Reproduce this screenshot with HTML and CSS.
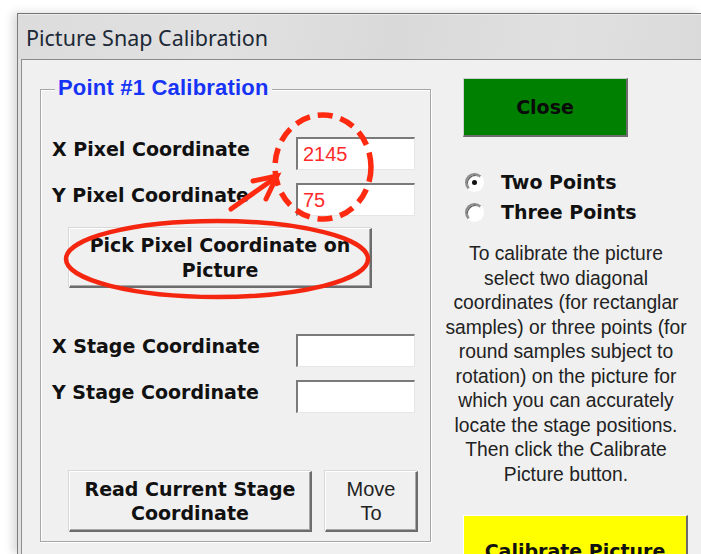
FILE: index.html
```html
<!DOCTYPE html>
<html lang="en">
<head>
<meta charset="utf-8">
<title>Picture Snap Calibration</title>
<link rel="stylesheet" href="styles.css">
</head>
<body>
<div class="window">
  <div class="titlebar">Picture Snap Calibration</div>
  <div class="frame">
    <div class="client">
      <section class="group">
        <h2 class="legend">Point #1 Calibration</h2>
        <div class="field">
          <label class="label" for="px">X Pixel Coordinate</label>
          <input class="box value" id="px" type="text" value="2145">
        </div>
        <div class="field next">
          <label class="label" for="py">Y Pixel Coordinate</label>
          <input class="box value" id="py" type="text" value="75">
        </div>
        <button class="btn pick" type="button">Pick Pixel Coordinate on<br>Picture</button>
        <div class="field stage">
          <label class="label" for="sx">X Stage Coordinate</label>
          <input class="box" id="sx" type="text" value="">
        </div>
        <div class="field next">
          <label class="label" for="sy">Y Stage Coordinate</label>
          <input class="box" id="sy" type="text" value="">
        </div>
        <div class="actions">
          <button class="btn read" type="button">Read Current Stage<br>Coordinate</button>
          <button class="btn move" type="button">Move<br>To</button>
        </div>
      </section>

      <aside class="side">
        <button class="btn close" type="button">Close</button>
        <div class="choices">
          <div class="choice"><span class="radio on"></span><span>Two Points</span></div>
          <div class="choice"><span class="radio"></span><span>Three Points</span></div>
        </div>
        <p class="note">To calibrate the picture<br>select two diagonal<br>coordinates (for rectanglar<br>samples) or three points (for<br>round samples subject to<br>rotation) on the picture for<br>which you can accurately<br>locate the stage positions.<br>Then click the Calibrate<br>Picture button.</p>
        <button class="btn calibrate" type="button">Calibrate Picture</button>
      </aside>
    </div>
  </div>
</div>

<svg class="marks" width="701" height="554" viewBox="0 0 701 554" aria-hidden="true">
  <ellipse cx="217" cy="259" rx="151" ry="38" fill="none" stroke="#f5260f" stroke-width="4.5"/>
  <ellipse cx="323" cy="167" rx="48" ry="52" fill="none" stroke="#ff2a10" stroke-width="5.5" stroke-dasharray="15 8"/>
  <path d="M231 209 L275 178" fill="none" stroke="#ff2a10" stroke-width="5" stroke-linecap="round"/>
  <path d="M253 181 L277 176 L266 199" fill="none" stroke="#ff2a10" stroke-width="5" stroke-linecap="round" stroke-linejoin="miter"/>
</svg>
</body>
</html>
```

FILE: styles.css
```css
html, body {
  margin: 0;
  padding: 0;
  background: #ffffff;
  overflow: hidden;
}

body {
  width: 701px;
  height: 554px;
  position: relative;
}

/* window chrome */
.window {
  margin: 13px 0 0 17px;
  width: 684px;
  height: 541px;
  border-top: 1px solid #747474;
  border-left: 1px solid #7c7c7c;
  background: #e2e2e2;
  box-shadow: -4px 0 9px rgba(0, 0, 0, 0.16);
  overflow: hidden;
  box-sizing: border-box;
}

.titlebar {
  height: 45px;
  line-height: 45px;
  padding-left: 8px;
  font-family: "Noto Sans", "Open Sans", sans-serif;
  font-size: 21.5px;
  color: #1c2836;
  background: linear-gradient(100deg, #dcdcdc 0%, #e1e1e1 30%, #d9d9d9 55%, #e0e0e0 80%, #dadada 100%);
  border-top: 1px solid #ececec;
  box-sizing: border-box;
}

.frame {
  padding-left: 3px;
  height: 100%;
}

.client {
  display: flex;
  align-items: flex-start;
  height: 100%;
  background: #f0f0f0;
  border-top: 1px solid #8a8a8a;
  border-left: 1px solid #8e8e8e;
  font-family: "DejaVu Sans", sans-serif;
  color: #111;
}

/* group box */
.group {
  position: relative;
  flex: none;
  box-sizing: border-box;
  width: 391px;
  height: 453px;
  margin: 29px 0 0 18px;
  padding: 47px 15px 0 11px;
  border: 1px solid #a6a6a6;
  box-shadow: inset 1px 1px 0 #ffffff, 1px 1px 0 #ffffff;
}

.legend {
  position: absolute;
  top: -13px;
  left: 14px;
  margin: 0;
  padding: 0 3px;
  background: #f0f0f0;
  font-family: "Liberation Sans", Arial, sans-serif;
  font-weight: bold;
  font-size: 22px;
  line-height: 22px;
  letter-spacing: 0.2px;
  color: #1733f6;
}

.field {
  display: flex;
  justify-content: space-between;
  align-items: flex-start;
  height: 33px;
}

.field.next {
  margin-top: 13px;
}

.field.stage {
  margin-top: 46px;
}

.label {
  margin-top: 1px;
  font-weight: bold;
  font-size: 19px;
  line-height: 22px;
  white-space: nowrap;
}

.box {
  box-sizing: border-box;
  width: 119px;
  height: 33px;
  margin: 0;
  padding: 0 0 0 5px;
  border-style: solid;
  border-width: 2px 1px 1px 2px;
  border-color: #7a7a7a #e6e6e6 #e6e6e6 #7a7a7a;
  background: #ffffff;
  font-family: "Liberation Sans", Arial, sans-serif;
  font-size: 20px;
  outline: none;
}

.value {
  color: #ff2b2b;
}

/* raised push buttons */
.btn {
  display: flex;
  align-items: center;
  justify-content: center;
  flex: none;
  box-sizing: border-box;
  margin: 0;
  padding: 0;
  background: #f0f0f0;
  border-style: solid;
  border-width: 1px 2px 2px 1px;
  border-color: #ffffff #6c6c6c #6c6c6c #ffffff;
  box-shadow: inset -1px -1px 0 #a9a9a9, -1px -1px 0 #d8d8d8;
  font-family: "DejaVu Sans", sans-serif;
  font-weight: bold;
  font-size: 19px;
  color: #111;
  text-align: center;
  white-space: nowrap;
}

.pick {
  width: 303px;
  height: 60px;
  margin: 12px 0 0 17px;
  line-height: 25px;
}

.actions {
  display: flex;
  gap: 13px;
  margin: 58px 0 0 17px;
}

.read {
  width: 243px;
  height: 61px;
  line-height: 24px;
}

.move {
  width: 93px;
  height: 61px;
  line-height: 24px;
  font-family: "Liberation Sans", Arial, sans-serif;
  font-weight: normal;
  font-size: 20px;
  color: #222;
}

/* right column */
.side {
  display: flex;
  flex-direction: column;
  align-items: flex-start;
  flex: none;
  width: 244px;
  margin-left: 13px;
  padding-top: 18px;
}

.close {
  width: 165px;
  height: 59px;
  margin-left: 19px;
  background: #008000;
  border-color: #cfcfcf #6c6c6c #6c6c6c #cfcfcf;
  box-shadow: none;
  color: #0a0a0a;
}

.choices {
  margin: 30px 0 0 21px;
}

.choice {
  display: flex;
  align-items: center;
  gap: 17px;
  height: 30px;
  font-weight: bold;
  font-size: 19px;
  line-height: 22px;
}

.radio {
  display: flex;
  align-items: center;
  justify-content: center;
  box-sizing: border-box;
  width: 19px;
  height: 19px;
  border-radius: 50%;
  border: 2px solid;
  border-color: #8a8a8a #ffffff #ffffff #8a8a8a;
  background: #ffffff;
  box-shadow: inset 1px 1px 0 #5a5a5a;
}

.radio.on::after {
  content: "";
  width: 5px;
  height: 5px;
  border-radius: 50%;
  background: #111;
}

.note {
  width: 244px;
  margin: 15px 0 0 0;
  font-family: "Liberation Sans", Arial, sans-serif;
  font-size: 19.3px;
  line-height: 24.5px;
  text-align: center;
  white-space: nowrap;
  color: #222;
}

.calibrate {
  width: 225px;
  height: 72px;
  margin: 28px 0 0 19px;
  background: #ffff00;
  border-color: #ffffff #6c6c6c #6c6c6c #ffffff;
  box-shadow: none;
}

/* red call-outs drawn over the dialog */
.marks {
  position: absolute;
  top: 0;
  left: 0;
  pointer-events: none;
}
```
